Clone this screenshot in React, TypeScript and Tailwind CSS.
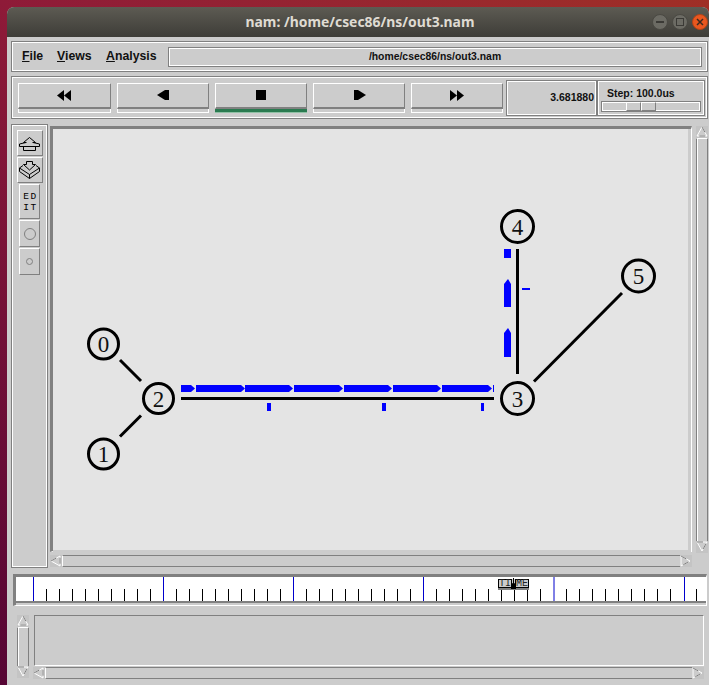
import { type ReactNode } from "react";

/* ── Tk style bevels ── */
const raised = "border border-t-white border-l-white border-b-[#808080] border-r-[#808080]";
const sunken = "border border-t-[#808080] border-l-[#808080] border-b-white border-r-white";
const groove = "border border-[#808080] shadow-[inset_0_0_0_1px_#ffffff]";

function Arrow({ dir }: { dir: "up" | "down" | "left" | "right" }) {
  const points = {
    up: "6,1 11,10 1,10",
    down: "1,1 11,1 6,10",
    left: "1,6 10,1 10,11",
    right: "1,1 10,6 1,11",
  }[dir];
  return (
    <svg width="12" height="12" viewBox="0 0 12 12" className="shrink-0 block bg-[#c4c4c4]">
      <polygon points={points} fill="#cccccc" stroke="#ffffff" strokeWidth="1" />
      <polyline points={points} fill="none" stroke="#808080" strokeWidth="1" strokeDasharray="6 6" />
    </svg>
  );
}

function HScroll({ className = "" }: { className?: string }) {
  return (
    <div className={`flex h-[12px] ${className}`}>
      <Arrow dir="left" />
      <div className="flex-1 border-y border-y-[#808080] border-l border-l-white" />
      <Arrow dir="right" />
    </div>
  );
}

function VScroll({ className = "" }: { className?: string }) {
  return (
    <div className={`flex flex-col w-[12px] ${className}`}>
      <Arrow dir="up" />
      <div className="flex-1 border-x border-x-[#808080] border-t border-t-white shadow-[inset_1px_0_0_#ffffff]" />
      <Arrow dir="down" />
    </div>
  );
}

/* ── Transport buttons ── */
function PlayButton({ children, active, wide }: { children: ReactNode; active?: boolean; wide?: boolean }) {
  return (
    <div className={`flex flex-col h-[30px] ${wide ? "w-[93px]" : "w-[92px]"}`}>
      <div className="h-[26px] flex items-center justify-center border-t border-l border-r border-t-white border-l-white border-r-[#808080] border-b-2 border-b-[#808080]">
        {children}
      </div>
      {active ? (
        <div className="h-[4px] bg-[#2a7a50] border-b border-[#8fc0a4]" />
      ) : (
        <div className="h-[4px] border-l border-r border-b border-white" />
      )}
    </div>
  );
}

function Transport({ points }: { points: string[] }) {
  return (
    <svg width="15" height="11" viewBox="0 0 15 11" className="block">
      {points.map((p) => (
        <polygon key={p} points={p} fill="#000" />
      ))}
    </svg>
  );
}

/* ── Left tool column ── */
function ToolButton({ children, className = "" }: { children: ReactNode; className?: string }) {
  return <div className={`flex items-center justify-center ${raised} ${className}`}>{children}</div>;
}

function ZoomIcon({ down }: { down?: boolean }) {
  return (
    <svg width="23" height="21" viewBox="0 0 23 21" fill="none" stroke="#000" strokeWidth="1" className="block">
      {down ? (
        <path d="M8.5 1.5 H14.5 V4.5 H17.5 L11.5 10 L5.5 4.5 H8.5 Z M5 5.5 L1.5 8 V11.5 L11.5 18.5 L21.5 11.5 V8 L18 5.5 M1.5 8 L11.5 14.5 L21.5 8 M11.5 14.5 V18.5" />
      ) : (
        <path d="M11.5 4.5 L5.5 9.5 H8.5 M11.5 4.5 L17.5 9.5 H14.5 M8 9.5 L1.5 11 V13.5 H21.5 V11 L15 9.5 M5.5 13.5 V17.5 H17.5 V13.5" />
      )}
    </svg>
  );
}

/* ── Network drawing, in page coordinates ── */
const nodes = [
  { id: 0, x: 103.5, y: 344, r: 15 },
  { id: 1, x: 103.5, y: 454, r: 15 },
  { id: 2, x: 158.5, y: 398.5, r: 15 },
  { id: 3, x: 517.5, y: 398.5, r: 16 },
  { id: 4, x: 517.5, y: 226.5, r: 16 },
  { id: 5, x: 638.5, y: 276, r: 16 },
];

const hPackets = [
  [181, 14],
  [196, 49],
  [245, 48],
  [294, 49],
  [344, 48],
  [393, 48],
  [442, 50],
];

function hPacket(x: number, w: number) {
  const e = x + w;
  return `${x},385 ${e - 4},385 ${e},388.5 ${e - 4},392 ${x},392`;
}

function vPacket(top: number, bottom: number) {
  return `508,${top} 511,${top + 5} 511,${bottom} 504,${bottom} 504,${top + 5}`;
}

function Network() {
  return (
    <svg width="635" height="421" viewBox="54 129 635 421" className="block">
      <g stroke="#000" strokeWidth="3">
        <line x1="120" y1="360" x2="141" y2="381" />
        <line x1="120" y1="436.5" x2="141" y2="415.5" />
        <line x1="181" y1="398.5" x2="494" y2="398.5" />
        <line x1="517.5" y1="249" x2="517.5" y2="374" />
        <line x1="534" y1="381.5" x2="622" y2="293" />
      </g>
      {hPackets.map(([x, w]) => (
        <polygon key={x} points={hPacket(x, w)} fill="#0000ff" />
      ))}
      <rect x="493" y="385" width="1" height="7" fill="#0000ff" />
      <rect x="504" y="249" width="7" height="9" fill="#0000ff" />
      <polygon points={vPacket(279, 307)} fill="#0000ff" />
      <polygon points={vPacket(328, 357)} fill="#0000ff" />
      <rect x="267" y="403" width="4" height="8" fill="#0000ff" />
      <rect x="382" y="403" width="4" height="8" fill="#0000ff" />
      <rect x="481" y="403" width="3" height="8" fill="#0000ff" />
      <rect x="522" y="288" width="8" height="2" fill="#0000ff" />
      {nodes.map((n) => (
        <g key={n.id}>
          <circle cx={n.x} cy={n.y} r={n.r} fill="none" stroke="#000" strokeWidth="3" />
          <text
            x={n.x}
            y={n.y + 8}
            textAnchor="middle"
            fontSize="23"
            fill="#111"
            fontFamily="'Liberation Serif', serif"
          >
            {n.id}
          </text>
        </g>
      ))}
    </svg>
  );
}

/* ── Time slider ── */
const blueTicks = [17, 147, 277, 407, 537.5, 668];
const blackTicks = Array.from({ length: 52 }, (_, i) => 17 + (i + 1) * 13).filter(
  (x) => !blueTicks.some((b) => Math.abs(b - x) < 2)
);

function TimeSlider() {
  return (
    <div className="relative ml-[6px] mt-[6px] w-[694px] h-[32px] border-t-[3px] border-l-[3px] border-[#808080] border-b border-r border-b-white border-r-white">
      <div className="h-[24px] bg-white">
        <svg width="690" height="24" viewBox="0 0 690 24" className="block">
          {blackTicks.map((x) => (
            <line key={x} x1={x + 0.5} y1="12" x2={x + 0.5} y2="24" stroke="#000" />
          ))}
          {blueTicks.map((x) => (
            <line key={x} x1={x + 0.5} y1="0" x2={x + 0.5} y2="24" stroke="#0000cc" />
          ))}
        </svg>
      </div>
      <div className="h-[2px] bg-[#808080]" />
      {/* slider thumb */}
      <div className="absolute left-[482px] top-[2px] w-[31px] h-[11px] flex bg-[#cccccc] border-b-2 border-[#808080] font-['Liberation_Mono',monospace] text-[10px] leading-[7px] text-[#222]">
        <div className="w-[14px] h-[9px] border border-black">TI</div>
        <div className="relative w-[3px] h-[9px]">
          <svg width="5" height="11" viewBox="0 0 5 11" className="absolute -left-px -top-px block">
            <polygon points="2,0 3,0 3,5 5,6 5,11 0,11 0,6 2,5" fill="#000" />
          </svg>
        </div>
        <div className="w-[14px] h-[9px] border border-black">ME</div>
      </div>
    </div>
  );
}

export default function App() {
  return (
    <div className="w-[709px] h-[685px] overflow-hidden pl-[7px] pt-[7px] bg-linear-to-bl from-[#9f2f26] via-[#8e1a38] to-[#560534] font-['Liberation_Sans',sans-serif]">
      <div className="w-[702px] h-[678px] bg-[#cccccc] rounded-t-[7px] overflow-hidden">
        {/* title bar */}
        <div className="relative h-[30px] bg-linear-to-b from-[#5d5b53] to-[#3e3d38] flex items-center justify-center pl-[4px]">
          <span className="text-[13.9px] font-bold text-[#dfdbd2] font-['Noto_Sans',sans-serif]">nam: /home/csec86/ns/out3.nam</span>
          <div className="absolute right-px top-[7px] flex gap-[4px]">
            <div className="w-[16px] h-[16px] rounded-full bg-[#6c6b64] border border-[#4a4943] flex items-center justify-center">
              <div className="w-[8px] h-[2px] bg-[#3b3a36]" />
            </div>
            <div className="w-[16px] h-[16px] rounded-full bg-[#6c6b64] border border-[#4a4943] flex items-center justify-center">
              <div className="w-[8px] h-[8px] border border-[#3b3a36]" />
            </div>
            <div className="w-[16px] h-[16px] rounded-full bg-[#e9571f] border border-[#b34418] flex items-center justify-center">
              <svg width="8" height="8" viewBox="0 0 8 8" stroke="#3b2a20" strokeWidth="1.5">
                <path d="M1 1 L7 7 M7 1 L1 7" />
              </svg>
            </div>
          </div>
        </div>

        {/* menu bar */}
        <div className={`mt-[4px] ml-[4px] w-[697px] h-[31px] flex items-center pl-[10px] pr-[5px] text-[12.3px] font-bold text-[#111] ${groove}`}>
          <span className="w-[35px]"><u>F</u>ile</span>
          <span className="w-[49px]"><u>V</u>iews</span>
          <span className="w-[62px]"><u>A</u>nalysis</span>
          <div className={`w-[534px] h-[20px] flex items-center justify-center text-[10.4px] ${groove}`}>
            /home/csec86/ns/out3.nam
          </div>
        </div>

        {/* transport bar */}
        <div className={`mt-[4px] ml-[4px] w-[697px] h-[43px] flex items-center pl-[6px] pr-[2px] ${groove}`}>
          <div className="flex gap-[6px]">
            <PlayButton wide>
              <Transport points={["0,5.5 7,0 7,11", "7,5.5 14,0 14,11"]} />
            </PlayButton>
            <PlayButton>
              <Transport points={["1,5 9,0 13,0 13,10 9,10"]} />
            </PlayButton>
            <PlayButton active>
              <Transport points={["2,0 12,0 12,10 2,10"]} />
            </PlayButton>
            <PlayButton>
              <Transport points={["2,0 6,0 14,5 6,10 2,10"]} />
            </PlayButton>
            <PlayButton>
              <Transport points={["0,0 7,5.5 0,11", "7,0 14,5.5 7,11"]} />
            </PlayButton>
          </div>
          <div className={`ml-[3px] w-[91px] h-[36px] flex items-center justify-end pr-[2px] text-[10.5px] font-bold text-[#111] ${groove}`}>
            3.681880
          </div>
          <div className={`w-[108px] h-[36px] pl-[3px] pr-[3px] ${groove}`}>
            <div className="pl-[6px] pt-[5px] h-[20px] text-[10.5px] font-bold text-[#111]">Step: 100.0us</div>
            <div className={`h-[11px] flex pl-[24px] ${groove}`}>
              <div className={`w-[15px] h-[9px] ${raised}`} />
              <div className={`w-[15px] h-[9px] ${raised}`} />
            </div>
          </div>
        </div>

        {/* middle: tools and canvas */}
        <div className="flex mt-[5px] ml-[4px]">
          <div className={`w-[37px] h-[444px] flex flex-col items-center pt-[5px] gap-px ${groove}`}>
            <ToolButton className="w-[26px] h-[26px]"><ZoomIcon /></ToolButton>
            <ToolButton className="w-[26px] h-[26px]"><ZoomIcon down /></ToolButton>
            <ToolButton className="w-[21px] h-[35px]">
              <span className="font-['Liberation_Mono',monospace] text-[9.5px] leading-[11px] text-black tracking-[1.5px] pl-[2px]">ED<br />IT</span>
            </ToolButton>
            <ToolButton className="w-[21px] h-[27px]">
              <div className="w-[12px] h-[12px] rounded-full border border-[#808080]" />
            </ToolButton>
            <ToolButton className="w-[21px] h-[27px]">
              <div className="w-[7px] h-[7px] rounded-full border border-[#808080]" />
            </ToolButton>
          </div>
          <div className="ml-[2px] flex flex-col mt-[2px]">
            <div className="flex">
              <div className="w-[642px] h-[426px] border-t-[3px] border-l-[3px] border-[#808080] border-b border-r border-b-white border-r-white">
                <div className="w-[638px] h-[424px] pl-px bg-[#e4e4e4] border-b-[3px] border-r-[3px] border-[#cccccc]">
                  <Network />
                </div>
              </div>
              <VScroll className="ml-[4px] h-[427px]" />
            </div>
            <HScroll className="mt-[2px] w-[642px]" />
          </div>
        </div>

        <TimeSlider />

        {/* annotation panel */}
        <div className="flex mt-[9px] ml-[10px]">
          <VScroll className="h-[63px]" />
          <div className="ml-[4px] w-[671px]">
            <div className={`h-[51px] ml-px ${sunken}`} />
            <HScroll className="mt-px" />
          </div>
        </div>
      </div>
    </div>
  );
}
